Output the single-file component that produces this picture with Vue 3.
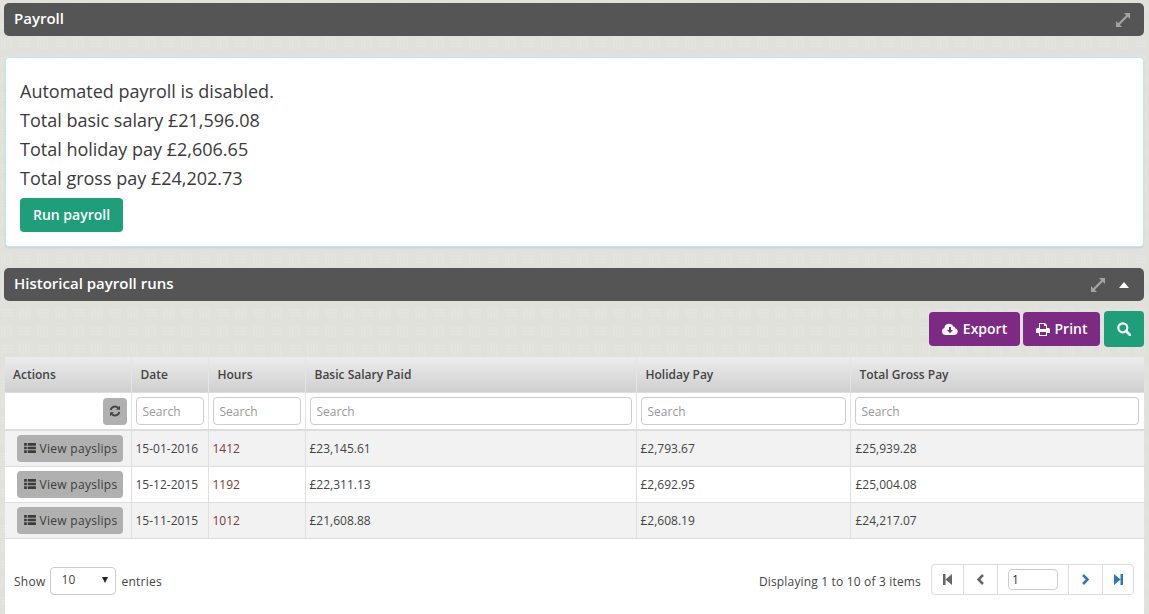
<script setup>
const rows = [
  { date: '15-01-2016', hours: '1412', basic: '£23,145.61', holiday: '£2,793.67', gross: '£25,939.28' },
  { date: '15-12-2015', hours: '1192', basic: '£22,311.13', holiday: '£2,692.95', gross: '£25,004.08' },
  { date: '15-11-2015', hours: '1012', basic: '£21,608.88', holiday: '£2,608.19', gross: '£24,217.07' },
]
const cols = ['Date', 'Hours', 'Basic Salary Paid', 'Holiday Pay', 'Total Gross Pay']
</script>

<template>
  <div class="page">
    <div class="bar">
      <span class="title">Payroll</span>
      <span class="bar-icons">
        <svg class="expand" viewBox="0 0 14 14"><path d="M8 0h6v6l-2.200-2.200-8 8L6 14H0V8l2.200 2.200 8-8z" /></svg>
      </span>
    </div>

    <div class="card">
      <p>Automated payroll is disabled.</p>
      <p>Total basic salary £21,596.08</p>
      <p>Total holiday pay £2,606.65</p>
      <p>Total gross pay £24,202.73</p>
      <button class="run">Run payroll</button>
    </div>

    <div class="bar">
      <span class="title">Historical payroll runs</span>
      <span class="bar-icons">
        <svg class="expand" viewBox="0 0 14 14"><path d="M8 0h6v6l-2.200-2.200-8 8L6 14H0V8l2.200 2.200 8-8z" /></svg>
        <svg class="caret" viewBox="0 0 10 6"><path d="M5 0l5 6H0z" /></svg>
      </span>
    </div>

    <div class="toolbar">
      <button class="tool purple">
        <svg class="ico-cloud" viewBox="0 0 16 12"><path fill-rule="evenodd" d="M3.600 12A3.600 3.600 0 0 1 2.400 5 4.800 4.800 0 0 1 11.500 3.500 2.600 2.600 0 0 1 13.500 5.600 3.300 3.300 0 0 1 12.800 12zM7 4v3H5l3 3.200L11 7H9V4z" /></svg>
        <span class="lbl">Export</span>
      </button>
      <button class="tool purple">
        <svg class="ico-print" viewBox="0 0 14 13"><path fill-rule="evenodd" d="M3 0h6l2 2v3h1.500A1.500 1.500 0 0 1 14 6.500V10h-3v3H3v-3H0V6.500A1.500 1.500 0 0 1 1.500 5H3zM4 1v5h6V3H8V1zM4 9v3h6V9z" /></svg>
        <span class="lbl">Print</span>
      </button>
      <button class="tool green">
        <svg class="ico-search" viewBox="0 0 14 14"><circle cx="5.800" cy="5.800" r="4.500" fill="none" stroke="#fff" stroke-width="2.200" /><path d="M9 9l4 4" stroke="#fff" stroke-width="2.600" stroke-linecap="round" /></svg>
      </button>
    </div>

    <div class="panel">
      <table>
        <colgroup>
          <col class="c1" /><col class="c2" /><col class="c3" /><col class="c4" /><col class="c5" /><col />
        </colgroup>
        <thead>
          <tr class="head">
            <th>Actions</th>
            <th v-for="c in cols" :key="c">{{ c }}</th>
          </tr>
          <tr class="filters">
            <td class="reset-cell">
              <button class="reset">
                <svg viewBox="0 0 12 12"><path fill="none" stroke="#444" stroke-width="1.900" d="M1.700 5A4.400 4.400 0 0 1 9.400 3.200M10.300 7A4.400 4.400 0 0 1 2.600 8.800" /><path fill="#444" d="M11 .8v4H7zM1 11.200v-4h4z" /></svg>
              </button>
            </td>
            <td v-for="c in cols" :key="c"><input placeholder="Search" /></td>
          </tr>
        </thead>
        <tbody>
          <tr v-for="r in rows" :key="r.date" class="row">
            <td class="act">
              <button class="view">
                <svg viewBox="0 0 13 11"><path d="M0 0h3v3H0zM4 0h9v3H4zM0 4h3v3H0zM4 4h9v3H4zM0 8h3v3H0zM4 8h9v3H4z" /></svg>
                <span>View payslips</span>
              </button>
            </td>
            <td>{{ r.date }}</td>
            <td class="hours">{{ r.hours }}</td>
            <td>{{ r.basic }}</td>
            <td>{{ r.holiday }}</td>
            <td>{{ r.gross }}</td>
          </tr>
        </tbody>
      </table>

      <div class="footer">
        <div class="show">
          <span class="word">Show</span>
          <span class="select"><span>10</span><i class="arrow"></i></span>
          <span class="word">entries</span>
        </div>
        <div class="paging">
          <span class="info">Displaying 1 to 10 of 3 items</span>
          <div class="pager">
            <span class="pg p-w"><svg viewBox="0 0 9 11"><path fill="#666" d="M0 0h2.500v11H0zM9 0v11L2.500 5.500z" /></svg></span>
            <span class="pg p-x"><svg viewBox="0 0 9 11"><path fill="none" stroke="#666" stroke-width="2.500" d="M7 1L2.500 5.500 7 10" /></svg></span>
            <span class="pg p-in"><span class="page-input">1</span></span>
            <span class="pg p-x2"><svg viewBox="0 0 9 11"><path fill="none" stroke="#2f76b5" stroke-width="2.500" d="M2 1l4.500 4.500L2 10" /></svg></span>
            <span class="pg p-w2"><svg viewBox="0 0 9 11"><path fill="#2f76b5" d="M9 0H6.500v11H9zM0 0v11l6.500-5.500z" /></svg></span>
          </div>
        </div>
      </div>
    </div>
  </div>
</template>

<style>
html, body { margin: 0; padding: 0; height: 100%; overflow: hidden; }
body {
  background-color: #e1e1dc;
  background-image: url("data:image/svg+xml,%3Csvg xmlns='http://www.w3.org/2000/svg' width='36' height='36'%3E%3Cpath stroke='%23fff' stroke-opacity='.16' d='M2 1v12M5 1v12M8 1v12M11 1v12M20 19v12M23 19v12M26 19v12M29 19v12M19 4h12M19 7h12M19 10h12M1 22h12M1 25h12M1 28h12' fill='none'/%3E%3C/svg%3E");
}
</style>

<style scoped>
.page {
  box-sizing: border-box;
  height: 614px;
  overflow: hidden;
  padding: 3px 5px 0 4px;
  font-family: "Open Sans", "Liberation Sans", sans-serif;
  color: #333;
}
.bar {
  height: 33px;
  background: #555;
  border-radius: 5px;
  display: flex;
  align-items: center;
  justify-content: space-between;
  padding: 0 14px 0 10px;
  color: #fff;
}
.title { font-size: 15px; font-weight: 600; padding-bottom: 4px; }
.bar-icons { display: flex; align-items: center; gap: 14px; }
.expand { width: 14px; height: 14px; fill: #a3a3a3; display: block; }
.caret { width: 10px; height: 6px; fill: #fff; display: block; margin-right: 1px; }
.card {
  box-sizing: border-box;
  height: 190px;
  margin: 21px 0 21px 1px;
  background: #fff;
  border: 1px solid #b9eaef;
  border-radius: 4px;
  padding: 19px 14px 0;
  box-shadow: 0 1px 2px rgba(0,0,0,.08);
}
.card p { margin: 0; font-size: 18px; line-height: 29px; color: #3a3a3a; }
.run {
  display: block;
  width: 103px;
  height: 34px;
  margin-top: 5px;
  background: #1f9e7a;
  border: 0;
  border-radius: 4px;
  color: #fff;
  font: 600 14px "Open Sans", sans-serif;
  padding: 0 0 2px;
}
.toolbar {
  display: flex;
  justify-content: flex-end;
  align-items: center;
  gap: 3px;
  height: 36px;
  margin-top: 10px;
}
.tool {
  border: 0;
  color: #fff;
  font: 600 14px "Open Sans", sans-serif;
  border-radius: 4px;
  display: flex;
  align-items: center;
  justify-content: center;
  gap: 5px;
  padding: 0;
}
.lbl { padding-bottom: 2px; }
.purple { background: #7d2a84; height: 34px; }
.purple:nth-child(1) { width: 91px; }
.purple:nth-child(2) { width: 77px; }
.green { background: #1f9e7a; width: 40px; height: 36px; margin-left: 1px; }
.ico-cloud { width: 16px; height: 12px; fill: #fff; }
.ico-print { width: 14px; height: 13px; fill: #fff; }
.ico-search { width: 14px; height: 14px; }
.panel {
  box-sizing: border-box;
  margin: 10px 0 0 1px;
  height: 260px;
  background: #fff;
}
table {
  width: 100%;
  table-layout: fixed;
  border-collapse: collapse;
  font-size: 12px;
  color: #444;
}
.c1 { width: 126px; }
.c2 { width: 77px; }
.c3 { width: 97px; }
.c4 { width: 331px; }
.c5 { width: 214px; }
.head th {
  height: 35px;
  padding: 0 9px;
  box-sizing: border-box;
  text-align: left;
  font-weight: 600;
  font-size: 12px;
  color: #444;
  background: linear-gradient(#ececec, #cfcfcf);
  border-right: 1px solid #e4e4e4;
  border-bottom: 1px solid #ddd;
}
.head th:first-child { padding-left: 8px; }
.filters td {
  height: 38px;
  box-sizing: border-box;
  padding: 1px 4px 0;
  border-right: 1px solid #e4e4e4;
  border-bottom: 2px solid #ddd;
  background: #fff;
}
.filters td:last-child { padding-right: 5px; }
.reset-cell { text-align: right; }
.reset {
  width: 24px;
  height: 27px;
  padding: 0;
  border: 0;
  border-radius: 4px;
  background: #b0b0b0;
  display: inline-flex;
  align-items: center;
  justify-content: center;
  vertical-align: middle;
}
.reset svg { width: 12px; height: 12px; }
input {
  box-sizing: border-box;
  display: block;
  width: 100%;
  height: 28px;
  border: 1px solid #ccc;
  border-radius: 4px;
  padding: 0 6px;
  font: 12px "Open Sans", sans-serif;
  background: #fff;
  outline: none;
}
input::placeholder { color: #999; opacity: 1; }
.row td {
  height: 36px;
  box-sizing: border-box;
  padding: 0 4px;
  border-right: 1px solid #e0e0e0;
  border-bottom: 1px solid #ddd;
  color: #444;
}
.row:nth-child(odd) td { background: #f2f2f2; }
.row td.hours { color: #7a3b3b; }
.row td:last-child { padding-left: 5px; }
td:last-child, th:last-child { border-right: 0 !important; }
.row td.act { padding: 0 0 0 12px; text-align: left; }
.view {
  box-sizing: border-box;
  width: 106px;
  height: 27px;
  padding: 0 0 0 2px;
  border: 0;
  border-radius: 4px;
  background: #b0b0b0;
  color: #3c3c3c;
  font: 12px "Open Sans", sans-serif;
  letter-spacing: .3px;
  display: inline-flex;
  align-items: center;
  justify-content: center;
  gap: 3px;
  vertical-align: middle;
}
.view svg { width: 12px; height: 10px; fill: #3c3c3c; }
.footer {
  display: flex;
  justify-content: space-between;
  align-items: flex-start;
  padding: 25px 10px 0 9px;
  font-size: 12px;
  color: #444;
}
.show {
  display: flex;
  align-items: center;
  gap: 5px;
  margin-top: 3px;
  letter-spacing: .25px;
}
.word { padding-top: 2px; }
.select {
  box-sizing: border-box;
  width: 66px;
  height: 28px;
  border: 1px solid #ccc;
  border-radius: 4px;
  padding: 0 7px 2px 10px;
  display: flex;
  align-items: center;
  justify-content: space-between;
}
.arrow {
  width: 0;
  height: 0;
  border-left: 3px solid transparent;
  border-right: 3px solid transparent;
  border-top: 6px solid #222;
}
.paging { display: flex; align-items: center; gap: 10px; }
.info { letter-spacing: .17px; padding-top: 5px; }
.pager {
  display: flex;
  height: 31px;
  box-sizing: border-box;
  border: 1px solid #ddd;
  border-radius: 4px;
}
.pg {
  display: flex;
  align-items: center;
  justify-content: center;
  box-sizing: border-box;
  border-right: 1px solid #ddd;
}
.pg:last-child { border-right: 0; }
.pg svg { width: 9px; height: 11px; display: block; }
.p-w { width: 32px; }
.p-x { width: 34px; }
.p-in { width: 71px; }
.p-x2 { width: 34px; }
.p-w2 { width: 30px; }
.page-input {
  box-sizing: border-box;
  width: 50px;
  height: 21px;
  border: 1px solid #ccc;
  border-radius: 4px;
  padding-left: 3px;
  line-height: 19px;
  font-size: 12px;
  color: #333;
}
</style>
